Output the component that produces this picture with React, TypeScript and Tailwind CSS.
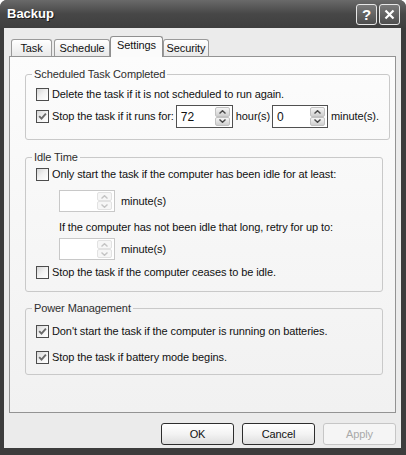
import type { ReactNode } from "react";

function CheckBox({ checked }: { checked?: boolean }) {
  return (
    <span className="flex h-[13px] w-[13px] shrink-0 items-center justify-center border border-[#4d4d4d] bg-gradient-to-br from-[#d6d6d6] via-[#f2f2f2] to-white">
      {checked && (
        <svg width="9" height="9" viewBox="0 0 9 9">
          <path d="M1.2 4.2 L3.5 6.6 L7.9 1.6" stroke="#6a6a6a" strokeWidth="1.9" fill="none" />
        </svg>
      )}
    </span>
  );
}

function Arrow({ up, color }: { up?: boolean; color: string }) {
  return (
    <svg width="7" height="4" viewBox="0 0 7 4">
      <path d={up ? "M0.5 3.5 L3.5 0.7 L6.5 3.5" : "M0.5 0.5 L3.5 3.3 L6.5 0.5"} stroke={color} strokeWidth="1.4" fill="none" />
    </svg>
  );
}

function SpinBox({ value, disabled, className }: { value?: string; disabled?: boolean; className: string }) {
  const arrow = disabled ? "#c4c4c4" : "#4a4a4a";
  const btn = disabled
    ? "flex flex-1 items-center justify-center rounded-[2px] border border-[#e2e2e2] bg-[#f6f6f6]"
    : "flex flex-1 items-center justify-center rounded-[2px] border border-[#c2c2c2] bg-gradient-to-b from-[#f6f6f6] to-[#cfcfcf]";
  return (
    <span
      className={`flex shrink-0 items-stretch border bg-white py-[1px] pr-[2px] pl-[4px] ${
        disabled ? "border-[#c8c8c8]" : "border-[#505050]"
      } ${className}`}
    >
      <span className="flex flex-1 items-center text-[12px] text-[#111]">{value}</span>
      <span className="flex w-[15px] flex-col">
        <span className={btn}>
          <Arrow up color={arrow} />
        </span>
        <span className={btn}>
          <Arrow color={arrow} />
        </span>
      </span>
    </span>
  );
}

function Row({ checked, children, className }: { checked?: boolean; children: ReactNode; className: string }) {
  return (
    <div className={`flex items-center ${className}`}>
      <CheckBox checked={checked} />
      <span className="ml-[3px] whitespace-nowrap">{children}</span>
    </div>
  );
}

function Group({ title, className, children }: { title: string; className: string; children: ReactNode }) {
  return (
    <fieldset className={`w-[358px] rounded-[3px] border border-[#c9c9c9] ${className}`}>
      <legend className="ml-[6px] px-[2px] text-[11px] leading-[13px] text-[#2e2e2e]">{title}</legend>
      {children}
    </fieldset>
  );
}

function Tab({ label, selected, className }: { label: string; selected?: boolean; className: string }) {
  return selected ? (
    <div
      className={`relative z-10 -mb-px h-[21px] rounded-t-[3px] border border-b-0 border-[#8f8f8f] bg-[#fbfbfb] text-center leading-[17px] text-[#111] ${className}`}
    >
      {label}
    </div>
  ) : (
    <div
      className={`h-[17px] rounded-t-[3px] border border-b-0 border-[#9a9a9a] bg-gradient-to-b from-white to-[#e9e9e9] text-center leading-[16px] text-[#111] ${className}`}
    >
      {label}
    </div>
  );
}

function Button({ label, disabled }: { label: string; disabled?: boolean }) {
  return (
    <div
      className={`flex h-[22px] w-[73px] items-center justify-center rounded-[3px] border ${
        disabled
          ? "border-[#c6c6c6] bg-[#f5f5f5] text-[#a9a9a9]"
          : "border-[#2d2d2d] bg-gradient-to-b from-white via-[#f3f3f3] to-[#dedede] text-[#111]"
      }`}
    >
      {label}
    </div>
  );
}

export default function App() {
  return (
    <div className="h-[455px] w-[406px] bg-white font-['Liberation_Sans',Arial,sans-serif] text-[11px] tracking-[-0.1px] text-[#111]">
      <div className="flex h-full flex-col rounded-t-[7px] bg-[#3c3c3c]">
        {/* title bar */}
        <div className="flex h-[28px] items-center rounded-t-[7px] bg-gradient-to-b from-[#6a6a6a] via-[#474747] to-[#3e3e3e] pr-[6px] pl-[7px]">
          <span className="text-[13px] font-bold tracking-normal text-white [text-shadow:1px_1px_#1e1e1e]">Backup</span>
          <div className="ml-auto flex gap-[2px] pt-[1px]">
            <div className="flex h-[21px] w-[21px] items-center justify-center rounded-[3px] border border-[#e6e6e6] bg-gradient-to-b from-[#7a7a7a] to-[#4e4e4e] text-[15px] leading-none font-bold text-white">
              ?
            </div>
            <div className="flex h-[21px] w-[21px] items-center justify-center rounded-[3px] border border-[#e6e6e6] bg-gradient-to-b from-[#7a7a7a] to-[#4e4e4e]">
              <svg width="11" height="11" viewBox="0 0 11 11">
                <path d="M1.5 1.5 L9.5 9.5 M9.5 1.5 L1.5 9.5" stroke="white" strokeWidth="2.2" />
              </svg>
            </div>
          </div>
        </div>

        {/* body */}
        <div className="mr-[5px] mb-[7px] ml-[4px] flex flex-1 flex-col bg-[#ebebeb]">
          <div className="mt-[8px] ml-[7px] flex h-[20px] items-end">
            <Tab label="Task" className="w-[41px]" />
            <Tab label="Schedule" className="ml-[2px] w-[56px]" />
            <Tab label="Settings" selected className="w-[53px]" />
            <Tab label="Security" className="w-[46px]" />
          </div>

          <div className="ml-[5px] flex h-[357px] w-[387px] flex-col border border-[#939393] bg-gradient-to-b from-[#fcfcfc] to-[#f1f1f1] pt-[11px] pl-[15px]">
            <Group title="Scheduled Task Completed" className="pb-[11px]">
              <div className="px-[10px] pt-[3px]">
                <Row className="h-[20px]">Delete the task if it is not scheduled to run again.</Row>
                <div className="mt-[1px] flex h-[23px] items-center">
                  <CheckBox checked />
                  <span className="ml-[3px] whitespace-nowrap">Stop the task if it runs for:</span>
                  <SpinBox value="72" className="ml-[2px] h-[23px] w-[57px]" />
                  <span className="ml-[3px]">hour(s)</span>
                  <SpinBox value="0" className="ml-[2px] h-[23px] w-[56px]" />
                  <span className="ml-[3px]">minute(s).</span>
                </div>
              </div>
            </Group>

            <Group title="Idle Time" className="mt-[11px] pb-[9px]">
              <div className="px-[10px]">
                <Row className="h-[20px]">Only start the task if the computer has been idle for at least:</Row>
                <div className="mt-[6px] ml-[23px] flex h-[22px] items-center">
                  <SpinBox disabled className="h-[22px] w-[56px]" />
                  <span className="ml-[6px]">minute(s)</span>
                </div>
                <div className="mt-[8px] ml-[23px] flex h-[14px] items-center whitespace-nowrap">
                  If the computer has not been idle that long, retry for up to:
                </div>
                <div className="mt-[4px] ml-[23px] flex h-[22px] items-center">
                  <SpinBox disabled className="h-[22px] w-[56px]" />
                  <span className="ml-[6px]">minute(s)</span>
                </div>
                <Row className="mt-[2px] h-[20px]">Stop the task if the computer ceases to be idle.</Row>
              </div>
            </Group>

            <Group title="Power Management" className="mt-[10px] pb-[7px]">
              <div className="px-[10px] pt-[6px]">
                <Row checked className="h-[20px]">
                  Don't start the task if the computer is running on batteries.
                </Row>
                <Row checked className="mt-[6px] h-[20px]">
                  Stop the task if battery mode begins.
                </Row>
              </div>
            </Group>
          </div>

          <div className="mt-[10px] flex justify-end gap-[8px] pr-[5px]">
            <Button label="OK" />
            <Button label="Cancel" />
            <Button label="Apply" disabled />
          </div>
        </div>
      </div>
    </div>
  );
}
